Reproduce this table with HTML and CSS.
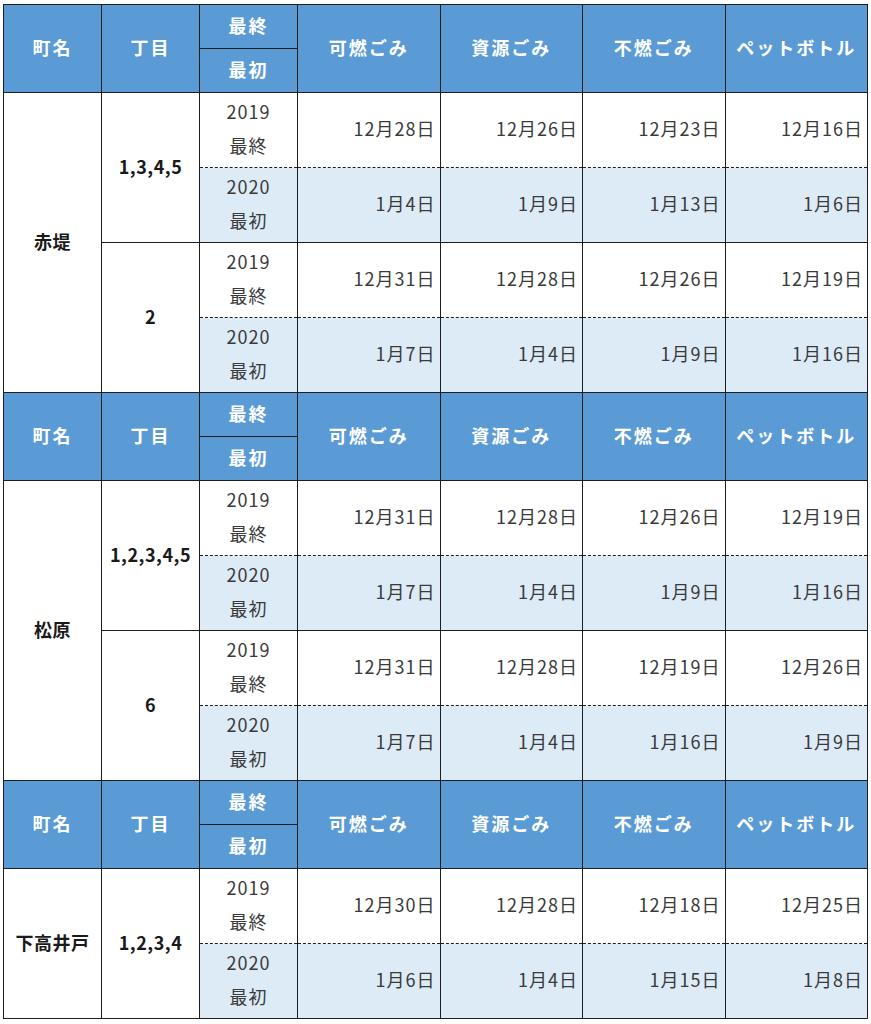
FILE: index.html
```html
<!DOCTYPE html>
<html lang="ja">
<head>
<meta charset="utf-8">
<link rel="stylesheet" href="styles.css">
</head>
<body>
<table class="sched">
  <colgroup>
    <col class="c-town"><col class="c-chome"><col class="c-label">
    <col class="c-date"><col class="c-date"><col class="c-date"><col class="c-date">
  </colgroup>
  <tbody>
    <tr class="hrow">
      <th rowspan="2">町名</th><th rowspan="2">丁目</th><th class="sub">最終</th>
      <th rowspan="2">可燃ごみ</th><th rowspan="2">資源ごみ</th><th rowspan="2">不燃ごみ</th><th rowspan="2">ペットボトル</th>
    </tr>
    <tr class="hrow"><th class="sub">最初</th></tr>

    <tr class="drow first">
      <td rowspan="4" class="town">赤堤</td><td rowspan="2" class="chome">1,3,4,5</td>
      <td class="label">2019<br>最終</td>
      <td class="date">12月28日</td><td class="date">12月26日</td><td class="date">12月23日</td><td class="date">12月16日</td>
    </tr>
    <tr class="drow alt">
      <td class="label">2020<br>最初</td>
      <td class="date">1月4日</td><td class="date">1月9日</td><td class="date">1月13日</td><td class="date">1月6日</td>
    </tr>
    <tr class="drow first">
      <td rowspan="2" class="chome">2</td>
      <td class="label">2019<br>最終</td>
      <td class="date">12月31日</td><td class="date">12月28日</td><td class="date">12月26日</td><td class="date">12月19日</td>
    </tr>
    <tr class="drow alt">
      <td class="label">2020<br>最初</td>
      <td class="date">1月7日</td><td class="date">1月4日</td><td class="date">1月9日</td><td class="date">1月16日</td>
    </tr>

    <tr class="hrow">
      <th rowspan="2">町名</th><th rowspan="2">丁目</th><th class="sub">最終</th>
      <th rowspan="2">可燃ごみ</th><th rowspan="2">資源ごみ</th><th rowspan="2">不燃ごみ</th><th rowspan="2">ペットボトル</th>
    </tr>
    <tr class="hrow"><th class="sub">最初</th></tr>

    <tr class="drow first">
      <td rowspan="4" class="town">松原</td><td rowspan="2" class="chome">1,2,3,4,5</td>
      <td class="label">2019<br>最終</td>
      <td class="date">12月31日</td><td class="date">12月28日</td><td class="date">12月26日</td><td class="date">12月19日</td>
    </tr>
    <tr class="drow alt">
      <td class="label">2020<br>最初</td>
      <td class="date">1月7日</td><td class="date">1月4日</td><td class="date">1月9日</td><td class="date">1月16日</td>
    </tr>
    <tr class="drow first">
      <td rowspan="2" class="chome">6</td>
      <td class="label">2019<br>最終</td>
      <td class="date">12月31日</td><td class="date">12月28日</td><td class="date">12月19日</td><td class="date">12月26日</td>
    </tr>
    <tr class="drow alt">
      <td class="label">2020<br>最初</td>
      <td class="date">1月7日</td><td class="date">1月4日</td><td class="date">1月16日</td><td class="date">1月9日</td>
    </tr>

    <tr class="hrow">
      <th rowspan="2">町名</th><th rowspan="2">丁目</th><th class="sub">最終</th>
      <th rowspan="2">可燃ごみ</th><th rowspan="2">資源ごみ</th><th rowspan="2">不燃ごみ</th><th rowspan="2">ペットボトル</th>
    </tr>
    <tr class="hrow"><th class="sub">最初</th></tr>

    <tr class="drow first">
      <td rowspan="2" class="town">下高井戸</td><td rowspan="2" class="chome">1,2,3,4</td>
      <td class="label">2019<br>最終</td>
      <td class="date">12月30日</td><td class="date">12月28日</td><td class="date">12月18日</td><td class="date">12月25日</td>
    </tr>
    <tr class="drow alt">
      <td class="label">2020<br>最初</td>
      <td class="date">1月6日</td><td class="date">1月4日</td><td class="date">1月15日</td><td class="date">1月8日</td>
    </tr>
  </tbody>
</table>
</body>
</html>
```

FILE: styles.css
```css
html, body {
  margin: 0;
  padding: 0;
  background: #ffffff;
}

body {
  padding: 4px 0 0 3px;
  font-family: "Noto Sans CJK JP", "Noto Sans", sans-serif;
  font-size: 18px;
  color: #3a3a3a;
}

.sched {
  border-collapse: collapse;
  table-layout: fixed;
  width: 864px;
}

.c-town, .c-chome, .c-label { width: 98px; }
.c-date { width: 142.5px; }

.sched th,
.sched td {
  border: 1px solid #1e1e1e;
  padding: 0 0 4px 0;
}

.hrow { height: 44px; }
.drow { height: 75px; }

.sched th {
  background: #5b9bd5;
  color: #ffffff;
  font-weight: bold;
  letter-spacing: 2px;
  text-align: center;
  vertical-align: middle;
}

.town, .chome {
  font-weight: bold;
  color: #1a1a1a;
  text-align: center;
  vertical-align: middle;
  letter-spacing: 0.5px;
}

.label {
  text-align: center;
  line-height: 34px;
  letter-spacing: 1px;
}

.sched .date {
  text-align: right;
  padding-right: 4px;
  letter-spacing: 1px;
  vertical-align: middle;
}

.first .label,
.first .date {
  border-bottom: 1px dashed #1e1e1e;
}

.alt .label,
.alt .date {
  background: #ddebf7;
  border-top: 1px dashed #1e1e1e;
}
```
